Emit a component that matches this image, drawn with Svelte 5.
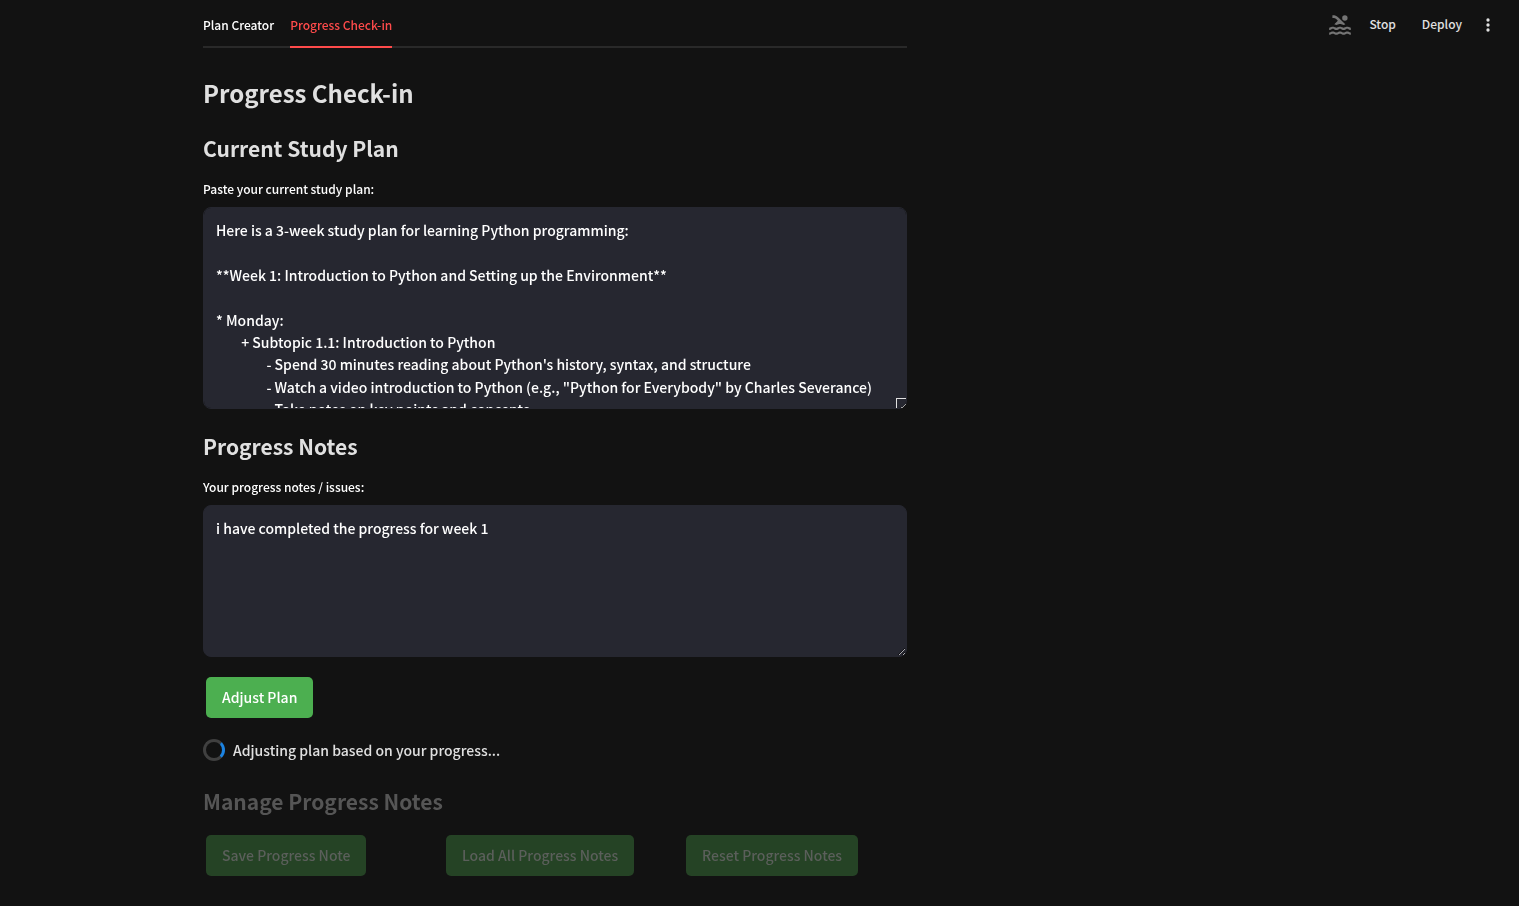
<script>
  let activeTab = $state('progress');
  let plan = $state(
    [
      'Here is a 3-week study plan for learning Python programming:',
      '',
      '**Week 1: Introduction to Python and Setting up the Environment**',
      '',
      '* Monday:',
      '\t+ Subtopic 1.1: Introduction to Python',
      "\t\t- Spend 30 minutes reading about Python's history, syntax, and structure",
      '\t\t- Watch a video introduction to Python (e.g., "Python for Everybody" by Charles Severance)',
      '\t\t- Take notes on key points and concepts'
    ].join('\n')
  );
  let notes = $state('i have completed the progress for week 1');
  const tabs = [
    { id: 'creator', label: 'Plan Creator' },
    { id: 'progress', label: 'Progress Check-in' }
  ];
  const noteActions = ['Save Progress Note', 'Load All Progress Notes', 'Reset Progress Notes'];
</script>

<div class="page">
  <header class="toolbar">
    <svg class="swimmer" viewBox="0 0 24 24" aria-hidden="true">
      <path d="M22 21c-1.11 0-1.73-.37-2.18-.64-.37-.22-.6-.36-1.15-.36-.56 0-.78.13-1.15.36-.46.27-1.07.64-2.18.64s-1.73-.37-2.18-.64c-.37-.22-.6-.36-1.15-.36-.56 0-.78.13-1.15.36-.46.27-1.08.64-2.19.64-1.11 0-1.73-.37-2.18-.64-.37-.23-.6-.36-1.15-.36s-.78.13-1.15.36c-.46.27-1.08.64-2.19.64v-2c.56 0 .78-.13 1.15-.36.46-.27 1.08-.64 2.19-.64s1.73.37 2.18.64c.37.23.59.36 1.15.36.56 0 .78-.13 1.15-.36.46-.27 1.08-.64 2.19-.64 1.11 0 1.73.37 2.18.64.37.22.6.36 1.15.36s.78-.13 1.15-.36c.45-.27 1.07-.64 2.18-.64s1.73.37 2.18.64c.37.23.59.36 1.15.36v2zm0-4.5c-1.11 0-1.73-.37-2.18-.64-.37-.22-.6-.36-1.15-.36-.56 0-.78.13-1.15.36-.45.27-1.07.64-2.18.64s-1.73-.37-2.18-.64c-.37-.22-.6-.36-1.15-.36-.56 0-.78.13-1.15.36-.45.27-1.07.64-2.18.64s-1.73-.37-2.18-.64c-.37-.22-.6-.36-1.15-.36s-.78.13-1.15.36c-.47.27-1.09.64-2.2.64v-2c.56 0 .78-.13 1.15-.36.45-.27 1.07-.64 2.18-.64s1.73.37 2.18.64c.37.22.6.36 1.15.36.56 0 .78-.13 1.15-.36.45-.27 1.07-.64 2.18-.64s1.73.37 2.18.64c.37.22.6.36 1.15.36s.78-.13 1.15-.36c.45-.27 1.07-.64 2.18-.64s1.73.37 2.18.64c.37.22.6.36 1.15.36v2zM8.67 12c.56 0 .78-.13 1.15-.36.46-.27 1.08-.64 2.19-.64 1.11 0 1.73.37 2.18.64.37.22.6.36 1.15.36s.78-.13 1.15-.36c.12-.07.26-.15.41-.23L10.48 5C8.93 3.45 7.5 2.99 5 3v2.5c1.82-.01 2.89.39 4 1.5l1 1-3.25 3.25c.31.12.56.27.77.39.37.23.59.36 1.15.36z" />
      <circle cx="16.5" cy="5.5" r="2.5" />
    </svg>
    <button class="tool">Stop</button>
    <button class="tool">Deploy</button>
    <button class="more" aria-label="Main menu">
      <svg viewBox="0 0 24 24" aria-hidden="true">
        <circle cx="12" cy="6" r="2" /><circle cx="12" cy="12" r="2" /><circle cx="12" cy="18" r="2" />
      </svg>
    </button>
  </header>

  <main>
    <div class="tabs" role="tablist">
      {#each tabs as tab}
        <button
          class="tab"
          class:active={activeTab === tab.id}
          role="tab"
          aria-selected={activeTab === tab.id}
          onclick={() => (activeTab = tab.id)}>{tab.label}</button>
      {/each}
    </div>

    <h1>Progress Check-in</h1>

    <section>
      <h2>Current Study Plan</h2>
      <label for="plan">Paste your current study plan:</label>
      <textarea id="plan" class="plan" bind:value={plan} spellcheck="false"></textarea>
    </section>

    <section>
      <h2>Progress Notes</h2>
      <label for="notes">Your progress notes / issues:</label>
      <textarea id="notes" class="notes" bind:value={notes} spellcheck="false"></textarea>
    </section>

    <button class="action">Adjust Plan</button>

    <div class="status" role="status">
      <span class="spinner"></span>
      <span>Adjusting plan based on your progress...</span>
    </div>

    <section class="stale">
      <h2>Manage Progress Notes</h2>
      <div class="actions">
        {#each noteActions as label}
          <div><button class="action">{label}</button></div>
        {/each}
      </div>
    </section>
  </main>
</div>

<style>
  :global(body) {
    background: #121212;
  }
  .page {
    display: grid;
    grid-template-columns: 203fr 704fr 612fr;
    align-items: start;
    min-height: 100vh;
    color: #e0e0e0;
    font-family: 'Noto Sans CJK SC', sans-serif;
    font-size: 14px;
    font-weight: 500;
  }
  button,
  textarea {
    font: inherit;
    margin: 0;
    box-sizing: border-box;
  }
  button {
    border: 0;
    background: none;
    padding: 0;
    cursor: pointer;
  }
  .toolbar {
    grid-column: 3;
    grid-row: 1;
    display: flex;
    align-items: center;
    justify-content: flex-end;
    height: 50px;
    padding-right: 21px;
  }
  .swimmer {
    width: 26px;
    height: 26px;
    margin-right: 16px;
    fill: #757575;
  }
  .tool {
    color: #e0e0e0;
    font-size: 12px;
    line-height: 20px;
    padding-bottom: 2px;
    margin-right: 26px;
  }
  .tool + .more {
    margin-left: -10px;
  }
  .more {
    display: flex;
  }
  .more svg {
    width: 20px;
    height: 20px;
    fill: #e0e0e0;
  }
  main {
    grid-column: 2;
    grid-row: 1;
    min-width: 0;
    padding-bottom: 24px;
  }
  .tabs {
    display: flex;
    gap: 16px;
    height: 48px;
    box-shadow: inset 0 -2px #292929;
  }
  .tab {
    color: #fff;
    font-size: 12px;
    padding-top: 2px;
    border-bottom: 2px solid transparent;
  }
  .tab.active {
    color: #ff4b4b;
    border-color: #ff4b4b;
  }
  h1,
  h2 {
    margin: 0;
    font-weight: 600;
  }
  h1 {
    margin-top: 27px;
    font-size: 24px;
    line-height: 36px;
  }
  h2 {
    margin-top: 23px;
    font-size: 21px;
    line-height: 28px;
  }
  label {
    display: block;
    margin: 17px 0 8px;
    color: #fff;
    font-size: 12px;
    line-height: 20px;
  }
  textarea {
    display: block;
    width: 100%;
    padding: 11px 12px;
    border: 1px solid #262730;
    border-radius: 8px;
    background: #262730;
    color: #fff;
    line-height: 1.6;
    tab-size: 8;
    resize: vertical;
    outline: 0;
  }
  .plan::-webkit-resizer {
    background:
      linear-gradient(#e0e0e0, #e0e0e0) 5px 5px / 10px 1px no-repeat,
      linear-gradient(#e0e0e0, #e0e0e0) 5px 5px / 1px 10px no-repeat,
      linear-gradient(135deg, transparent 50%, #a0a0a0 50%, #a0a0a0 64%, #121212 64%) 10px 10px / 5px 5px no-repeat;
  }
  .plan {
    height: 202px;
  }
  .notes {
    height: 152px;
  }
  .action {
    display: block;
    margin-left: 3px;
    padding: 10px 16px;
    border-radius: 5px;
    background: #4caf50;
    color: #fff;
    line-height: 21px;
    white-space: nowrap;
  }
  main > .action {
    margin-top: 20px;
  }
  .status {
    display: flex;
    align-items: center;
    gap: 8px;
    margin-top: 20px;
    line-height: 24px;
  }
  .spinner {
    box-sizing: border-box;
    width: 22px;
    height: 22px;
    border: 3px solid #404040;
    border-right-color: #1c83e1;
    border-radius: 50%;
  }
  .stale h2 {
    margin-top: 25px;
    color: #555;
  }
  .actions {
    display: grid;
    grid-template-columns: repeat(3, 1fr);
    gap: 16px;
    margin-top: 20px;
  }
  .stale .action {
    background: #254325;
    color: #5b5f5b;
  }
</style>
